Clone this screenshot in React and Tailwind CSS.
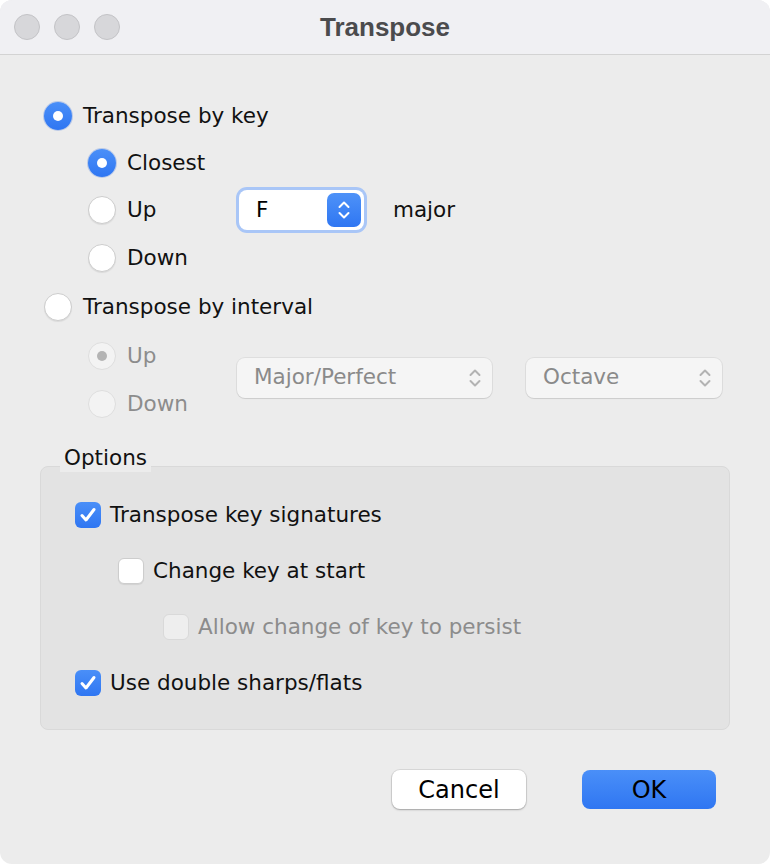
import React from 'react';

const font = { fontFamily: '"DejaVu Sans", "Lucida Grande", sans-serif' };

const Radio = ({ checked = false, disabled = false }) => {
  if (checked && !disabled) {
    return (
      <span className="w-[28px] h-[28px] rounded-full bg-gradient-to-b from-[#4a8ff8] to-[#2f76f2] flex items-center justify-center shadow-[0_0_0_1px_rgba(40,100,220,0.25)] shrink-0">
        <span className="w-[10px] h-[10px] rounded-full bg-white" />
      </span>
    );
  }
  if (disabled) {
    return (
      <span className="w-[28px] h-[28px] rounded-full bg-[#f3f3f3] border border-[#dedede] flex items-center justify-center shrink-0">
        {checked && <span className="w-[10px] h-[10px] rounded-full bg-[#b4b4b4]" />}
      </span>
    );
  }
  return (
    <span className="w-[28px] h-[28px] rounded-full bg-white border border-[#cdcdcd] shadow-[0_1px_1px_rgba(0,0,0,0.08)] shrink-0" />
  );
};

const Check = ({ checked = false, disabled = false }) => {
  if (checked) {
    return (
      <span className="w-[26px] h-[26px] rounded-[6px] bg-gradient-to-b from-[#4a8ff8] to-[#2f76f2] flex items-center justify-center shrink-0">
        <svg width="20" height="20" viewBox="0 0 20 20" fill="none">
          <path d="M4 10.5 L8 15 L16 4.5" stroke="white" strokeWidth="3" strokeLinecap="round" strokeLinejoin="round" />
        </svg>
      </span>
    );
  }
  if (disabled) {
    return <span className="w-[26px] h-[26px] rounded-[6px] bg-[#eeeeee] border border-[#d9d9d9] shrink-0" />;
  }
  return <span className="w-[26px] h-[26px] rounded-[6px] bg-white border border-[#cdcdcd] shadow-[0_1px_1px_rgba(0,0,0,0.08)] shrink-0" />;
};

const Chevrons = ({ color }) => (
  <svg width="14" height="22" viewBox="0 0 14 22" fill="none">
    <path d="M2.5 8 L7 3.5 L11.5 8" stroke={color} strokeWidth="2" strokeLinecap="round" strokeLinejoin="round" />
    <path d="M2.5 14 L7 18.5 L11.5 14" stroke={color} strokeWidth="2" strokeLinecap="round" strokeLinejoin="round" />
  </svg>
);

const DisabledPopup = ({ label, width }) => (
  <div className={`${width} h-[40px] rounded-[8px] bg-[#f5f5f5] shadow-[0_0_0_1px_rgba(0,0,0,0.06),0_1px_1px_rgba(0,0,0,0.08)] flex items-center justify-between pl-[17px] pr-[10px]`}>
    <span className="text-[21.5px] text-[#8a8a8a]">{label}</span>
    <Chevrons color="#b3b3b3" />
  </div>
);

export default function App() {
  return (
    <div className="w-[770px] h-[864px] bg-white" style={font}>
      <div className="w-full h-full rounded-[12px] overflow-hidden bg-[#ececec] flex flex-col text-[#111]">
        {/* title bar */}
        <div className="h-[55px] shrink-0 bg-[#f0f0f3] border-b border-[#d3d3d3] flex items-center relative">
          <div className="flex gap-[14px] pl-[14px]">
            <span className="w-[26px] h-[26px] rounded-full bg-[#d7d7da] border border-[#c3c3c6]" />
            <span className="w-[26px] h-[26px] rounded-full bg-[#d7d7da] border border-[#c3c3c6]" />
            <span className="w-[26px] h-[26px] rounded-full bg-[#d7d7da] border border-[#c3c3c6]" />
          </div>
          <div className="absolute inset-0 flex items-center justify-center pointer-events-none">
            <span className="text-[26px] font-bold text-[#4b4b4d]" style={{ fontFamily: '"Liberation Sans", Arial, sans-serif' }}>Transpose</span>
          </div>
        </div>

        {/* body */}
        <div className="flex flex-col pl-[44px] pt-[37px] text-[21.5px]">
          <div className="h-[48px] flex items-center gap-[11px]">
            <Radio checked />
            <span>Transpose by key</span>
          </div>
          <div className="pl-[44px] flex flex-col">
            <div className="h-[46px] flex items-center gap-[11px]">
              <Radio checked />
              <span>Closest</span>
            </div>
            <div className="h-[48px] flex items-center">
              <div className="w-[148px] flex items-center gap-[11px]">
                <Radio />
                <span>Up</span>
              </div>
              <div className="w-[131px] h-[46px] rounded-[11px] bg-[#a9c6f7] p-[3px]">
                <div className="w-full h-full rounded-[8px] bg-white flex items-center justify-between pl-[17px] pr-[3px]">
                  <span className="text-black">F</span>
                  <span className="w-[34px] h-[34px] rounded-[7px] bg-gradient-to-b from-[#4e92f8] to-[#2f76f2] flex items-center justify-center">
                    <Chevrons color="white" />
                  </span>
                </div>
              </div>
              <span className="ml-[26px]">major</span>
            </div>
            <div className="h-[48px] flex items-center gap-[11px]">
              <Radio />
              <span>Down</span>
            </div>
          </div>
          <div className="h-[50px] flex items-center gap-[11px]">
            <Radio />
            <span>Transpose by interval</span>
          </div>
          <div className="pl-[44px] flex items-center">
            <div className="w-[149px] flex flex-col">
              <div className="h-[48px] flex items-center gap-[11px]">
                <Radio checked disabled />
                <span className="text-[#8c8c8c]">Up</span>
              </div>
              <div className="h-[48px] flex items-center gap-[11px]">
                <Radio disabled />
                <span className="text-[#8c8c8c]">Down</span>
              </div>
            </div>
            <div className="flex gap-[34px] mb-[5px]">
              <DisabledPopup label="Major/Perfect" width="w-[255px]" />
              <DisabledPopup label="Octave" width="w-[196px]" />
            </div>
          </div>
        </div>

        {/* options */}
        <div className="mx-[40px] mt-[38px] relative text-[21.5px]">
          <span className="absolute left-[20px] -top-[22px] bg-[#ececec] px-[4px] leading-[28px]">Options</span>
          <div className="h-[264px] rounded-[8px] bg-[#e3e3e3] border border-[#d9d9d9] flex flex-col pt-[20px] pl-[34px]">
            <div className="h-[56px] flex items-center gap-[9px]">
              <Check checked />
              <span>Transpose key signatures</span>
            </div>
            <div className="h-[56px] flex items-center gap-[9px] pl-[43px]">
              <Check />
              <span>Change key at start</span>
            </div>
            <div className="h-[56px] flex items-center gap-[9px] pl-[88px]">
              <Check disabled />
              <span className="text-[#8c8c8c]">Allow change of key to persist</span>
            </div>
            <div className="h-[56px] flex items-center gap-[9px]">
              <Check checked />
              <span>Use double sharps/flats</span>
            </div>
          </div>
        </div>

        {/* buttons */}
        <div className="flex justify-end gap-[56px] pr-[54px] mt-[40px]">
          <button className="w-[134px] h-[39px] rounded-[8px] bg-white shadow-[0_0_0_1px_rgba(0,0,0,0.08),0_1px_2px_rgba(0,0,0,0.25)] text-[24px] text-black">Cancel</button>
          <button className="w-[134px] h-[39px] rounded-[8px] bg-gradient-to-b from-[#4a8ff8] to-[#2f76f2] text-[24px] text-black">OK</button>
        </div>
      </div>
    </div>
  );
}
